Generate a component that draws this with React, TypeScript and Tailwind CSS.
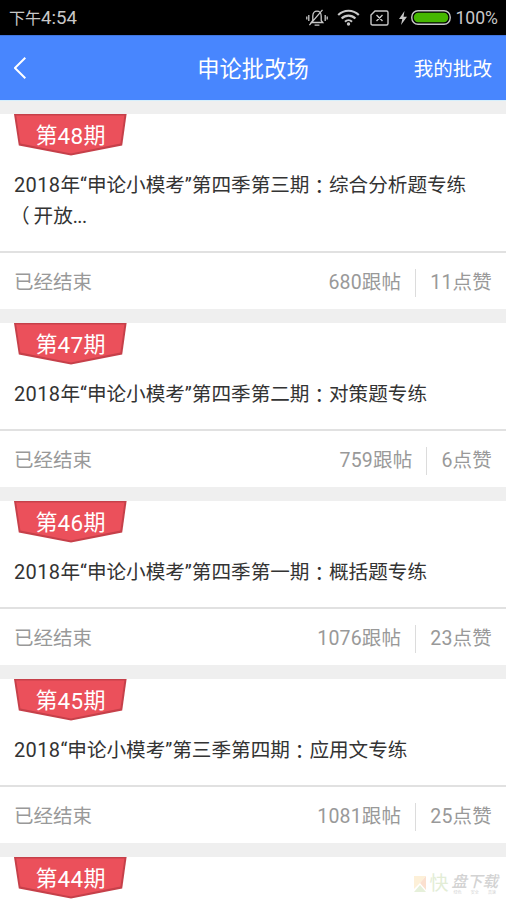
import { Fragment } from "react";

const topics = [
  { issue: "48", title: "2018年“申论小模考”第四季第三期：综合分析题专练（开放...", posts: "680", likes: "11" },
  { issue: "47", title: "2018年“申论小模考”第四季第二期：对策题专练", posts: "759", likes: "6" },
  { issue: "46", title: "2018年“申论小模考”第四季第一期：概括题专练", posts: "1076", likes: "23" },
  { issue: "45", title: "2018“申论小模考”第三季第四期：应用文专练", posts: "1081", likes: "25" },
  { issue: "44", title: "", posts: "", likes: "" },
];

// Full-width punctuation is centred in its cell, digits are set slightly wider
const Title = ({ text }: { text: string }) => (
  <>
    {text.split(/(\d+|[：（]|\.{3})/).map((part, i) => {
      if (/^\d/.test(part)) {
        return <span key={i} className="text-[20px] leading-none tracking-[0.35px]">{part}</span>;
      }
      if (part === "：") {
        return (
          <span key={i} className="inline-block translate-y-[2px] font-['Noto_Sans_CJK_TC',sans-serif] leading-none">
            {part}
          </span>
        );
      }
      if (part === "（") {
        return (
          <Fragment key={i}>
            <br />
            <span className="-ml-[4px] mr-[4px] font-['Noto_Sans_CJK_TC',sans-serif] leading-none">{part}</span>
          </Fragment>
        );
      }
      if (part === "...") {
        return <span key={i} className="tracking-[-0.6px]">{part}</span>;
      }
      return <Fragment key={i}>{part}</Fragment>;
    })}
  </>
);

const StatusBar = () => (
  <div className="flex h-[35px] shrink-0 items-center justify-between bg-black pl-[9px] pr-[8px] text-[#c8c8c8]">
    <span className="pt-[2px] text-[16px] leading-[33px]">
      下午<span className="text-[18.6px] leading-none">4:54</span>
    </span>
    <div className="flex items-center">
      {/* Muted bell */}
      <svg width="22" height="18" viewBox="0 0 22 18" fill="none" stroke="currentColor" strokeWidth="1.3">
        <path d="M5.2 13.5h11.6l-1.6-2V7.2c0-3.4-1.8-5-4.2-5s-4.2 1.6-4.2 5v4.3zM8.6 16.2h4.8M2.8 6v6M.8 7.5v3M19.2 6v6M21.2 7.5v3M3.4 16.2L16.5.9" />
      </svg>
      {/* Wifi */}
      <svg className="ml-[9px]" width="23" height="17" viewBox="0 0 23 17" fill="none" stroke="currentColor" strokeWidth="2.1">
        <path d="M1.2 6.1c5.8-5.8 14.8-5.8 20.6 0M4.6 9.5c3.9-3.9 9.9-3.9 13.8 0M8 12.7c2-2 5-2 7 0" />
        <circle cx="11.5" cy="15" r="1.7" fill="currentColor" stroke="none" />
      </svg>
      {/* No SIM */}
      <svg className="ml-[10px]" width="19" height="16" viewBox="0 0 19 16" fill="none" stroke="currentColor" strokeWidth="1.4">
        <path d="M5 1h11.5q1.5 0 1.5 1.5v11q0 1.5-1.5 1.5h-14Q1 15 1 13.5V5zM6.5 5l6 6M12.5 5l-6 6" />
      </svg>
      <svg className="ml-[10px]" width="8" height="14" viewBox="0 0 8 14" fill="currentColor">
        <path d="M5.5 0L0 8h3.3L2 14l6-8.2H4.5z" />
      </svg>
      <svg className="ml-[4px]" width="40" height="15" viewBox="0 0 40 15">
        <rect x=".8" y=".8" width="38.4" height="13.4" rx="6.2" fill="#000" stroke="#c8c8c8" strokeWidth="1.4" />
        <rect x="2.8" y="2.8" width="34.4" height="9.4" rx="4.4" fill="#46b700" />
      </svg>
      <span className="ml-[4px] pt-[1px] text-[17.6px] leading-[34px]">100%</span>
    </div>
  </div>
);

const Header = () => (
  <header className="grid h-[65px] shrink-0 grid-cols-[1fr_auto_1fr] items-center border-t border-[#3f74dc] bg-[#4886fe] px-[14px] text-white">
    <svg width="12" height="24" viewBox="0 0 12 24" fill="none" stroke="currentColor" strokeWidth="2">
      <path d="M11.3 1.7L.9 12l10.4 10.3" />
    </svg>
    <h1 className="pt-[2px] text-[22.3px] leading-[32px]">申论批改场</h1>
    <span className="justify-self-end pt-[3px] text-[19.6px] leading-[32px]">我的批改</span>
  </header>
);

const Badge = ({ issue }: { issue: string }) => (
  <div className="relative ml-[14px] h-[41px] w-[113px]">
    <svg className="absolute inset-0" width="113" height="42" viewBox="0 0 113 42">
      <path d="M0 0h112.6l-4.4 31.4L57 41.4 4.8 31.4z" fill="#c6404a" />
      <path d="M2.2 1.4h108.2l-4 28.2L57 39.4 6.4 29.6z" fill="#eb505b" />
    </svg>
    <div className="relative flex h-[44px] items-center justify-center text-[22px] leading-none text-white">
      第<span className="text-[22.5px] tracking-[0.3px]">{issue}</span>期
    </div>
  </div>
);

export default function App() {
  return (
    <div className="relative flex h-[900px] w-[506px] flex-col overflow-hidden bg-[#efefef] font-[Roboto,'Noto_Sans_CJK_SC',sans-serif]">
      <StatusBar />
      <Header />
      <main className="flex flex-col gap-[14px] border-t border-[#d5effc] pt-[13px]">
        {topics.map((t) => (
          <section key={t.issue} className="bg-white">
            <Badge issue={t.issue} />
            {t.title ? (
              <>
                <h2 className="px-[14px] pb-[19px] pt-[15px] text-[19.6px] leading-[31px] text-[#333]">
                  <Title text={t.title} />
                </h2>
                <div className="flex h-[58px] items-center border-t-2 border-[#e1e1e1] px-[14px] pt-[3px] text-[19.5px] leading-[28px] text-[#999]">
                  <span className="flex-1">已经结束</span>
                  <span className="tracking-[0.2px]">{t.posts}跟帖</span>
                  <span className="ml-[14px] mr-[14px] h-[28px] w-px bg-[#dcdcdc]" />
                  <span className="tracking-[0.2px]">{t.likes}点赞</span>
                </div>
              </>
            ) : (
              <div className="h-[60px]" />
            )}
          </section>
        ))}
      </main>

      {/* Watermark */}
      <div className="absolute bottom-[5px] right-[8px] flex items-center">
        <svg className="mr-[2px]" width="14" height="18" viewBox="0 0 14 18">
          <path d="M1 1h12L7 8 1 14z" fill="#fdf0d8" />
          <path d="M1 17l6-7 6 7z" fill="#e6f0da" />
          <path d="M7 8l6-7v14z" fill="#fbe0cf" />
        </svg>
        <span className="mr-[3px] text-[19px] leading-[22px] text-[#e3edd6]">快</span>
        <div className="flex flex-col text-[#d3d3d3]">
          <span className="text-[15.5px] font-medium italic leading-[16px]">盘下载</span>
          <span className="flex justify-between px-[2px] text-[4px] leading-[5px]">
            <span>绿色</span>
            <span>安全</span>
            <span>高速</span>
          </span>
        </div>
      </div>
    </div>
  );
}
